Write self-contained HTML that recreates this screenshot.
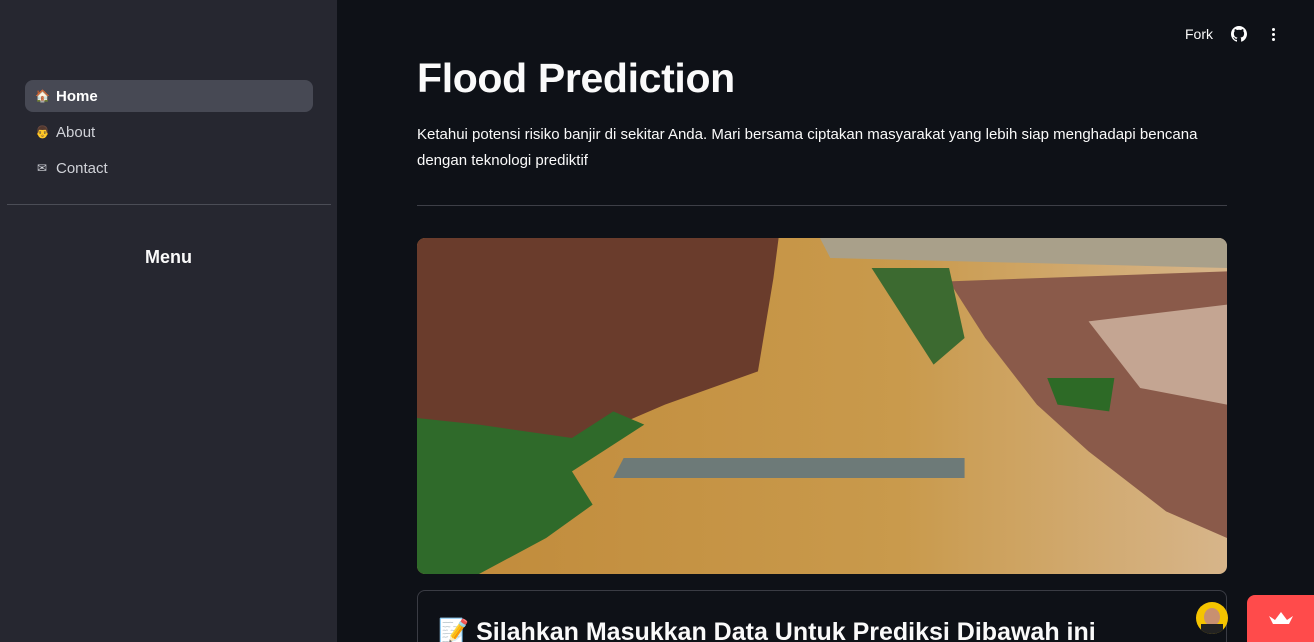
<!DOCTYPE html>
<html style="overflow:hidden;height:642px"><head><meta charset="utf-8"><style>
*{margin:0;padding:0;box-sizing:border-box}
body{width:1314px;height:642px;overflow:hidden;background:#0e1117;font-family:"Liberation Sans","Noto Sans CJK SC",sans-serif;color:#fafafa;position:relative}
.side{position:absolute;left:0;top:0;width:337px;height:642px;background:#262730}
.nav{position:absolute;left:25px;width:288px;height:32px;border-radius:8px;display:flex;align-items:center;padding-left:10px;font-size:15px;color:#d0d2d8}
.nav.act{background:#474954;color:#fff;font-weight:bold}
.ic{width:14px;margin-right:7px;font-size:12px;text-align:center}
.hr{position:absolute;left:7px;width:324px;height:1px;background:#4b4d56;top:204px}
h1{position:absolute;left:417px;top:55px;font-size:41px;font-weight:bold;letter-spacing:-0.35px}
.p{position:absolute;left:417px;top:122px;width:800px;font-size:15px;line-height:26px}
.mhr{position:absolute;left:417px;top:205px;width:810px;height:1px;background:#3d3f47}
.img{position:absolute;left:417px;top:238px;width:810px;height:336px;border-radius:8px;overflow:hidden}
.wrap{position:absolute;left:0;top:0;width:1314px;height:642px;overflow:hidden}
.card{position:absolute;left:417px;top:590px;width:810px;height:80px;border:1px solid #3a3c44;border-radius:8px}
.card h2{position:absolute;left:20px;top:27px;font-size:25px;font-weight:bold;white-space:nowrap;letter-spacing:0}
</style></head><body><div class="wrap">
<div class="side">
<div class="nav act" style="top:80px"><span class="ic">🏠</span>Home</div>
<div class="nav" style="top:116px"><span class="ic">👨</span>About</div>
<div class="nav" style="top:152px"><span class="ic">✉</span>Contact</div>
<div class="hr"></div>
<div style="position:absolute;top:247px;left:0;width:337px;text-align:center;font-weight:bold;font-size:18px">Menu</div>
</div>
<div style="position:absolute;left:1185px;top:26px;font-size:14px">Fork</div>
<svg style="position:absolute;left:1231px;top:26px" width="16" height="16" viewBox="0 0 16 16"><path fill="#fff" d="M8 0C3.6 0 0 3.6 0 8c0 3.5 2.3 6.5 5.5 7.6.4.1.5-.2.5-.4v-1.4c-2.200.5-2.700-1-2.700-1-.4-.9-.9-1.200-.9-1.200-.7-.5.1-.5.1-.5.8.1 1.200.8 1.200.8.7 1.200 1.900.9 2.300.7.1-.5.3-.9.5-1.100-1.800-.2-3.600-.9-3.600-4 0-.9.3-1.600.8-2.200-.1-.2-.4-1 .1-2.100 0 0 .7-.2 2.200.8.6-.2 1.300-.3 2-.3s1.400.1 2 .3c1.500-1 2.200-.8 2.200-.8.4 1.100.2 1.900.1 2.100.5.6.8 1.300.8 2.200 0 3.100-1.900 3.800-3.600 4 .3.3.6.8.6 1.500v2.200c0 .2.1.5.6.4C13.700 14.500 16 11.500 16 8c0-4.400-3.600-8-8-8z"/></svg>
<div style="position:absolute;left:1272px;top:28px;width:4px">
<div style="width:3px;height:3px;background:#fff;border-radius:50%;margin-bottom:2px"></div><div style="width:3px;height:3px;background:#fff;border-radius:50%;margin-bottom:2px"></div><div style="width:3px;height:3px;background:#fff;border-radius:50%"></div></div>
<h1>Flood Prediction</h1>
<div class="p">Ketahui potensi risiko banjir di sekitar Anda. Mari bersama ciptakan masyarakat yang lebih siap menghadapi bencana dengan teknologi prediktif</div>
<div class="mhr"></div>
<div class="img"><svg width="810" height="336" viewBox="0 0 1568 1008" preserveAspectRatio="none">
<defs><linearGradient id="w" x1="0" x2="1"><stop offset="0" stop-color="#c08a3a"/><stop offset=".6" stop-color="#c99a4c"/><stop offset="1" stop-color="#d7b58a"/></linearGradient></defs>
<rect width="1568" height="1008" fill="url(#w)"/>
<path d="M780 0H1568V90L800 60Z" fill="#a9a08a"/>
<path d="M0 0H700L690 120L660 400L480 500L300 620L150 720L0 800Z" fill="#6a3c2c"/>
<path d="M0 540L120 560L300 600L380 520L440 560L300 700L340 800L250 900L120 1008H0Z" fill="#2f6a2a"/>
<path d="M1030 130L1568 100V900L1450 820L1300 640L1200 500L1100 300Z" fill="#8a5a4a"/>
<path d="M1300 250L1568 200V500L1400 450Z" fill="#c4a592"/>
<path d="M880 90L1030 90L1060 300L1000 380Z" fill="#3c6a30"/>
<path d="M1220 420L1350 420L1340 520L1240 500Z" fill="#2d6a26"/>
<path d="M400 660H1060V720H380Z" fill="#6d7a78"/>
</svg></div>
<div class="card"><h2>📝 Silahkan Masukkan Data Untuk Prediksi Dibawah ini</h2></div>
<div style="position:absolute;left:1196px;top:602px;width:32px;height:32px;border-radius:50%;background:#f5c400;overflow:hidden"><div style="position:absolute;left:8px;top:6px;width:16px;height:18px;border-radius:50%;background:#c89070"></div><div style="position:absolute;left:5px;top:22px;width:22px;height:14px;background:#222"></div></div>
<div style="position:absolute;left:1247px;top:595px;width:67px;height:47px;background:#ff4b4b;border-radius:8px 0 0 0"><svg style="position:absolute;left:21px;top:16px" width="26" height="14" viewBox="0 0 26 14"><path d="M1 5L7 9L13 1L19 9L25 5L21 13H5Z" fill="#fff"/></svg></div>
</div></body></html>
